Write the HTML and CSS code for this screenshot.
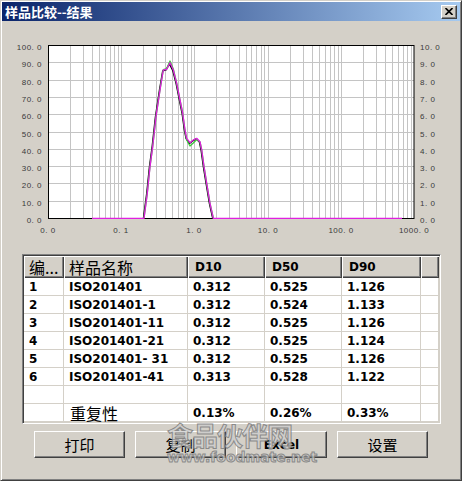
FILE: index.html
```html
<!DOCTYPE html>
<html>
<head>
<meta charset="utf-8">
<link rel="stylesheet" href="styles.css">
</head>
<body>
<div class="window">
  <div class="titlebar">
    <span class="title">样品比较--结果</span>
    <span class="close"><svg width="8" height="7" viewBox="0 0 8 7"><path d="M0.5 0 L7.5 7 M7.5 0 L0.5 7" stroke="#000" stroke-width="1.6" fill="none"/></svg></span>
  </div>
  <svg class="chart" width="458" height="224" viewBox="2 21 458 224">
    <rect x="48" y="45" width="366" height="173" fill="#fff"/>
    <path class="grid" d="M70.5 45V218M83.5 45V218M92.5 45V218M99.5 45V218M105.5 45V218M110.5 45V218M114.5 45V218M118.5 45V218M121.5 45V218M143.5 45V218M156.5 45V218M165.5 45V218M172.5 45V218M178.5 45V218M183.5 45V218M187.5 45V218M191.5 45V218M194.5 45V218M216.5 45V218M229.5 45V218M239.5 45V218M246.5 45V218M251.5 45V218M256.5 45V218M261.5 45V218M264.5 45V218M268.5 45V218M290.5 45V218M303.5 45V218M312.5 45V218M319.5 45V218M325.5 45V218M330.5 45V218M334.5 45V218M338.5 45V218M341.5 45V218M363.5 45V218M376.5 45V218M385.5 45V218M392.5 45V218M398.5 45V218M403.5 45V218M407.5 45V218M411.5 45V218M48 62.5H414M48 80.5H414M48 97.5H414M48 114.5H414M48 132.5H414M48 149.5H414M48 166.5H414M48 183.5H414M48 201.5H414"/>
    <rect x="48.5" y="45.5" width="365.5" height="173" fill="none" stroke="#000" stroke-width="1"/>
    <polyline class="c-black" points="144,218 147.3,193 150,166.5 152.7,146.5 156,116.5 160,90 163.3,70.5 166.7,69.5 170,63.5 173.3,70 176.7,83.3 180,100 182.7,113.3 185,130 186.7,138.3 190,143 193.3,140.5 196.7,138.5 200,141.7 201.7,150 204,166.7 206.7,183.3 210,203.3 213.3,218"/>
    <polyline class="c-green" points="144,218 147.3,193 150,166.5 152.7,146.5 156,116.5 160,90 163.3,69.5 166.7,68.5 170,61 173.3,69 176.7,83.3 180,100 182.7,113.3 185,131 186.7,140 190,146 193.3,143 196.7,139.5 200,142 201.7,150 204,166.7 206.7,183.3 210,203.3 213.3,218"/>
    <polyline class="c-mag" points="92,218.3 144,218.3 147.3,193.3 150,166.7 152.7,146.7 156,116.7 160,90 163.3,70 166.7,69.3 170,62.7 173.3,70 176.7,83.3 180,100 182.7,113.3 185,130 186.7,138.3 190,142.7 193.3,140 196.7,138.3 200,141.7 201.7,150 204,166.7 206.7,183.3 210,203.3 213.3,218.3 402,218.3"/>
    <g class="lbl lbl-left">
      <text x="42" y="50">100. 0</text>
      <text x="42" y="67">90. 0</text>
      <text x="42" y="85">80. 0</text>
      <text x="42" y="102">70. 0</text>
      <text x="42" y="119">60. 0</text>
      <text x="42" y="137">50. 0</text>
      <text x="42" y="154">40. 0</text>
      <text x="42" y="171">30. 0</text>
      <text x="42" y="188">20. 0</text>
      <text x="42" y="206">10. 0</text>
      <text x="42" y="223">0. 0</text>
    </g>
    <g class="lbl lbl-right">
      <text x="420" y="50">10. 0</text>
      <text x="420" y="67">9. 0</text>
      <text x="420" y="85">8. 0</text>
      <text x="420" y="102">7. 0</text>
      <text x="420" y="119">6. 0</text>
      <text x="420" y="137">5. 0</text>
      <text x="420" y="154">4. 0</text>
      <text x="420" y="171">3. 0</text>
      <text x="420" y="188">2. 0</text>
      <text x="420" y="206">1. 0</text>
      <text x="420" y="223">0. 0</text>
    </g>
    <g class="lbl lbl-x">
      <text x="48" y="233">0. 0</text>
      <text x="121" y="233">0. 1</text>
      <text x="194" y="233">1. 0</text>
      <text x="268" y="233">10. 0</text>
      <text x="341" y="233">100. 0</text>
      <text x="414" y="233">1000. 0</text>
    </g>
  </svg>
  <div class="tablebox">
    <div class="grid-table">
      <div class="th cjk">编...</div>
      <div class="th cjk">样品名称</div>
      <div class="th">D10</div>
      <div class="th">D50</div>
      <div class="th">D90</div>
      <div class="th"></div>

      <div class="td">1</div><div class="td">ISO201401</div><div class="td">0.312</div><div class="td">0.525</div><div class="td">1.126</div><div class="td"></div>
      <div class="td">2</div><div class="td">ISO201401-1</div><div class="td">0.312</div><div class="td">0.524</div><div class="td">1.133</div><div class="td"></div>
      <div class="td">3</div><div class="td">ISO201401-11</div><div class="td">0.312</div><div class="td">0.525</div><div class="td">1.126</div><div class="td"></div>
      <div class="td">4</div><div class="td">ISO201401-21</div><div class="td">0.312</div><div class="td">0.525</div><div class="td">1.124</div><div class="td"></div>
      <div class="td">5</div><div class="td">ISO201401- 31</div><div class="td">0.312</div><div class="td">0.525</div><div class="td">1.126</div><div class="td"></div>
      <div class="td">6</div><div class="td">ISO201401-41</div><div class="td">0.313</div><div class="td">0.528</div><div class="td">1.122</div><div class="td"></div>
      <div class="td"></div><div class="td"></div><div class="td"></div><div class="td"></div><div class="td"></div><div class="td"></div>
      <div class="td"></div><div class="td cjk">重复性</div><div class="td">0.13%</div><div class="td">0.26%</div><div class="td">0.33%</div><div class="td"></div>
    </div>
  </div>
  <div class="buttons">
    <div class="btn cjk">打印</div>
    <div class="btn cjk">复制</div>
    <div class="btn latin">Excel</div>
    <div class="btn cjk">设置</div>
  </div>
  <div class="watermark">
    <div class="wm-cn">食品伙伴网</div>
    <div class="wm-en">www.foodmate.net</div>
  </div>
</div>
</body>
</html>
```
FILE: styles.css
```css
html, body {
  margin: 0;
  padding: 0;
  background: #d4d0c8;
}

.window {
  position: relative;
  width: 462px;
  height: 481px;
  box-sizing: border-box;
  background: #d4d0c8;
  border: 1px solid;
  border-color: #d4d0c8 #404040 #404040 #d4d0c8;
  box-shadow: inset 1px 1px #fff, inset -1px -1px #808080;
  padding: 1px;
  overflow: hidden;
}

.titlebar {
  height: 19px;
  display: flex;
  align-items: center;
  justify-content: space-between;
  background: linear-gradient(to right, #0a246a, #a6caf0);
  padding: 0 3px 0 3px;
}

.title {
  color: #fff;
  font-family: "Noto Sans CJK SC", sans-serif;
  font-weight: bold;
  font-size: 13px;
  line-height: 19px;
}

.close {
  width: 16px;
  height: 14px;
  box-sizing: border-box;
  background: #d4d0c8;
  border: 1px solid;
  border-color: #fff #404040 #404040 #fff;
  box-shadow: inset -1px -1px #808080;
  display: flex;
  align-items: center;
  justify-content: center;
  padding-bottom: 1px;
}

.chart {
  display: block;
}

.grid {
  stroke: #c4c4c4;
  stroke-width: 1;
  fill: none;
}

.c-black, .c-green, .c-mag {
  fill: none;
  stroke-width: 1.3;
  stroke-linejoin: round;
}
.c-black { stroke: #000; transform: translate(-0.6px, 0.4px); }
.c-green { stroke: #3cc83c; }
.c-mag { stroke: #e020e0; }

.lbl text {
  font-family: "Liberation Sans", Arial, sans-serif;
  font-size: 8px;
  letter-spacing: 0.5px;
  fill: #3a3a3a;
}
.lbl-left text { text-anchor: end; }
.lbl-right text { text-anchor: start; }
.lbl-x text { text-anchor: middle; }

.tablebox {
  margin: 9px 0 0 20px;
  width: 419px;
  height: 170px;
  box-sizing: border-box;
  border: 1px solid;
  border-color: #808080 #fff #fff #808080;
  box-shadow: inset 1px 1px #404040, inset -1px -1px #d4d0c8;
  padding: 1px;
  background: #fff;
}

.grid-table {
  display: grid;
  grid-template-columns: 40px 124px 77px 77px 79px 1fr;
  grid-template-rows: 22px;
  grid-auto-rows: 18px;
  font-family: "DejaVu Sans", sans-serif;
  font-weight: bold;
  font-size: 12px;
  color: #000;
}

.th {
  background: #d4d0c8;
  box-shadow: inset 1px 1px #fff, inset -1px -1px #404040, inset -2px -2px #808080;
  padding-left: 7px;
  display: flex;
  align-items: center;
  white-space: nowrap;
}

.th.cjk {
  font-family: "Noto Sans CJK SC", sans-serif;
  font-weight: normal;
  font-size: 16px;
  padding-left: 5px;
}

.td {
  box-sizing: border-box;
  border-right: 1px solid #d4d0c8;
  border-bottom: 1px solid #d4d0c8;
  padding-left: 5px;
  display: flex;
  align-items: center;
  white-space: nowrap;
}

.td.cjk {
  font-family: "Noto Sans CJK SC", sans-serif;
  font-weight: normal;
  font-size: 16px;
  padding-left: 6px;
}

.buttons {
  display: flex;
  gap: 10px;
  margin: 7px 0 0 32px;
}

.btn {
  width: 91px;
  height: 27px;
  box-sizing: border-box;
  background: #d4d0c8;
  border: 1px solid;
  border-color: #fff #404040 #404040 #fff;
  box-shadow: inset -1px -1px #808080;
  display: flex;
  align-items: center;
  justify-content: center;
  color: #000;
}

.btn.cjk {
  font-family: "Noto Sans CJK SC", sans-serif;
  font-size: 15px;
}

.btn.latin {
  font-family: "DejaVu Sans", sans-serif;
  font-weight: bold;
  font-size: 12px;
}

.watermark {
  position: absolute;
  left: 166px;
  top: 420px;
  pointer-events: none;
  color: rgba(205, 205, 205, 0.75);
  -webkit-text-stroke: 1px rgba(120, 120, 120, 0.8);
}

.wm-cn {
  font-family: "Noto Sans CJK SC", sans-serif;
  font-weight: bold;
  font-size: 26px;
  line-height: 28px;
  letter-spacing: -1px;
}

.wm-en {
  font-family: "DejaVu Sans", sans-serif;
  font-weight: bold;
  font-size: 14px;
  line-height: 16px;
}
```
